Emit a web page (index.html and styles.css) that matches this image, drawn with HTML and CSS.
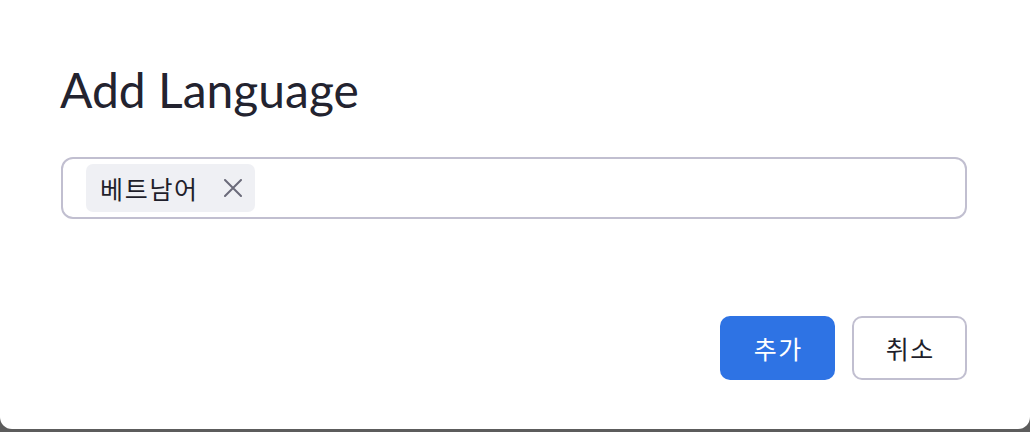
FILE: index.html
```html
<!DOCTYPE html>
<html lang="ko">
<head>
<meta charset="utf-8">
<link rel="stylesheet" href="styles.css">
<title>Add Language</title>
</head>
<body>
<div class="dialog">
  <h1 class="title">Add Language</h1>
  <div class="tag-input">
    <span class="chip">
      <span class="chip-label">베트남어</span>
      <svg class="chip-x" width="18" height="18" viewBox="0 0 18 18" aria-hidden="true">
        <path d="M1 1 L17 17 M17 1 L1 17" stroke="#6b6b7a" stroke-width="2" stroke-linecap="round" fill="none"/>
      </svg>
    </span>
  </div>
  <div class="actions">
    <button class="btn btn-primary">추가</button>
    <button class="btn btn-secondary">취소</button>
  </div>
</div>
</body>
</html>
```

FILE: styles.css
```css
html, body {
  margin: 0;
  padding: 0;
}
body {
  width: 1030px;
  height: 432px;
  background: #5c5c5c;
  overflow: hidden;
  font-family: "Noto Sans CJK KR", "Noto Sans", sans-serif;
}
.dialog {
  box-sizing: border-box;
  width: 1030px;
  height: 429px;
  background: #ffffff;
  border-radius: 0 0 12px 12px;
  padding: 61px 63px 0 60px;
  display: flex;
  flex-direction: column;
}
.title {
  margin: 0;
  font-family: Lato, "Noto Sans", sans-serif;
  font-weight: 400;
  font-size: 48px;
  line-height: 58px;
  color: #23232f;
}
.tag-input {
  margin-top: 38px;
  margin-left: 1px;
  box-sizing: border-box;
  height: 62px;
  border: 2px solid #c1bfd0;
  border-radius: 12px;
  padding: 0 23px;
  display: flex;
  align-items: center;
}
.chip {
  box-sizing: border-box;
  height: 48px;
  display: inline-flex;
  align-items: center;
  gap: 25px;
  padding: 0 13px 0 14px;
  background: #eff0f4;
  border-radius: 7px;
}
.chip-label {
  font-size: 25px;
  letter-spacing: 1.7px;
  color: #1f1f2b;
  line-height: 1;
}
.chip-x {
  display: block;
}
.actions {
  margin-top: 97px;
  display: flex;
  justify-content: flex-end;
  gap: 17px;
}
.btn {
  box-sizing: border-box;
  width: 115px;
  height: 64px;
  border-radius: 10px;
  font-family: "Noto Sans CJK KR", sans-serif;
  font-size: 25px;
  letter-spacing: 1.5px;
  padding: 0 0 0 1.5px;
  cursor: pointer;
}
.btn-primary {
  background: #2e73e4;
  color: #ffffff;
  border: none;
}
.btn-secondary {
  background: #ffffff;
  color: #1f1f2b;
  border: 2px solid #c1bfd0;
}
```
